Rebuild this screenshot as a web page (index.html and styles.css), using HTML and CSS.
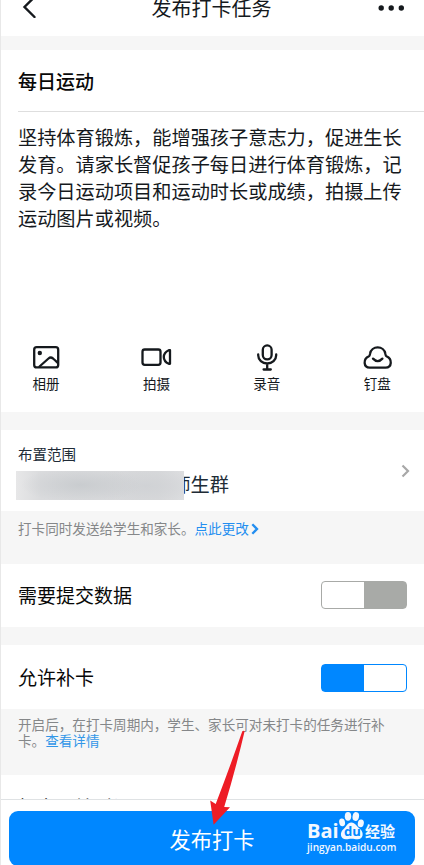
FILE: index.html
```html
<!DOCTYPE html>
<html lang="zh-CN">
<head>
<meta charset="utf-8">
<title>发布打卡任务</title>
<link rel="stylesheet" href="styles.css">
</head>
<body>
<div class="screen">
  <header class="topbar">
    <svg class="back" width="14" height="22" viewBox="0 0 14 22"><path d="M12.500 1L2.500 11l10 10"/></svg>
    <h1>发布打卡任务</h1>
    <svg class="more" width="28" height="6" viewBox="0 0 28 6"><circle cx="3.2" cy="3" r="2.7"/><circle cx="13.2" cy="3" r="2.7"/><circle cx="23.3" cy="3" r="2.7"/></svg>
  </header>
  <main class="content">
    <section class="task">
      <h2>每日运动</h2>
      <p class="desc">坚持体育锻炼，能增强孩子意志力，促进生长<br>发育。请家长督促孩子每日进行体育锻炼，记<br>录今日运动项目和运动时长或成绩，拍摄上传<br>运动图片或视频。</p>
      <div class="tools">
        <div class="tool">
          <svg width="32" height="28" viewBox="0 0 32 28"><rect x="4.2" y="4.2" width="24" height="20.200" rx="2.5"/><circle class="fill" cx="9.8" cy="10" r="2.2"/><path d="M9.500 23.500l9-8q2.200-1.900 4.500 0 1.800 1.600 4.500 4.200"/></svg>
          <span>相册</span>
        </div>
        <div class="tool">
          <svg width="32" height="28" viewBox="0 0 32 28"><rect x="2.500" y="6.5" width="18" height="15.3" rx="2.2"/><path d="M30 7.200v13.600h-1.200q-5-2.300-5-6.800t5-6.800z"/></svg>
          <span>拍摄</span>
        </div>
        <div class="tool">
          <svg width="32" height="28" viewBox="0 0 32 28"><rect x="11.800" y="2.400" width="8.8" height="14" rx="4.4"/><path d="M7.200 11.5v.8a9 8.2 0 0 0 18 0v-.8M16.200 20.500v6M12.600 26.5h7.200"/></svg>
          <span>录音</span>
        </div>
        <div class="tool">
          <svg width="32" height="28" viewBox="0 0 32 28"><path d="M8.800 24.600c-6.500 0-7-8.800-.8-11.400.9-.4.8-1.500 1.100-2.700a7.700 7.300 0 0 1 15.200 0c.3 1.200.2 2.300 1.100 2.700 6.200 2.600 5.700 11.400-.8 11.400z"/><path d="M12 15.600q4.700 5 9.400 0"/></svg>
          <span>钉盘</span>
        </div>
      </div>
    </section>
    <section class="scope">
      <div>
        <div class="label">布置范围</div>
        <div class="group"><span class="mask"></span><span class="name"><span>师生群</span></span></div>
      </div>
      <svg class="chevron" width="9" height="14" viewBox="0 0 9 14"><path d="M1.5 1.5L7 7l-5.5 5.5"/></svg>
    </section>
    <p class="note scope-note">打卡同时发送给学生和家长。<a>点此更改<svg width="8" height="12" viewBox="0 0 8 12"><path d="M1.3 1.3L6 6l-4.7 4.7"/></svg></a></p>
    <section class="row data-row"><span>需要提交数据</span><i class="switch"></i></section>
    <section class="row makeup-row"><span>允许补卡</span><i class="switch on"></i></section>
    <p class="note makeup-note">开启后，在打卡周期内，学生、家长可对未打卡的任务进行补<br>卡。<a>查看详情</a></p>
    <section class="row time-row"><span>打卡开始时间</span></section>
  </main>
  <footer class="bottom">
    <div class="publish">
      <span>发布打卡</span>
    </div>
  </footer>
  <svg class="arrow" width="36" height="96" viewBox="0 0 36 96"><path d="M32.200 1.600q1.800-1.800 2.300.2Q25.500 40 14.200 77l5.800.2L3.600 94.800.2 70.500l5.500 3.600Q19.500 38 32.200 1.600z"/></svg>
  <div class="brand">
    <div class="brand-top"><b class="bai">Bai</b><span class="paw"><svg width="27" height="29" viewBox="0 0 27 29"><ellipse cx="4.1" cy="11.4" rx="2.9" ry="3.9" transform="rotate(-12 4.1 11.4)"/><ellipse cx="10" cy="5.3" rx="3.2" ry="4.4"/><ellipse cx="17.8" cy="5.5" rx="3.2" ry="4.4" transform="rotate(12 17.8 5.5)"/><ellipse cx="22.8" cy="12.3" rx="3" ry="3.9" transform="rotate(12 22.8 12.3)"/><path d="M13.3 11.5c-4 0-4.6 4-7.4 6.3C1 21.5 2.500 28.300 8 28.300c2.200 0 3.500-.6 5.600-.6s3.700.6 5.900.6c5.800 0 7-6.800 2.300-10.500C18.500 15.500 17.500 11.500 13.300 11.500z"/></svg><b>du</b></span><b class="jy">经验</b></div>
    <div class="url">jingyan.baidu.com</div>
  </div>
</div>
</body>
</html>
```
FILE: styles.css
```css
* { box-sizing: border-box; }

body {
  margin: 0;
  background: #f6f6f6;
  color: #15191d;
  font-family: "Noto Sans CJK SC", sans-serif;
}

h1, h2, p { margin: 0; font-weight: 400; }

svg { display: block; fill: none; stroke: #15191d; }

.screen {
  position: relative;
  display: flex;
  flex-direction: column;
  width: 424px;
  height: 865px;
  overflow: hidden;
  border-left: 1px solid #e8e8e8;
}

.topbar {
  display: flex;
  flex: none;
  align-items: flex-start;
  justify-content: space-between;
  height: 36px;
  padding: 0 18px 0 21px;
  background: #fff;
}
.topbar h1 { margin: -7px 0 0 9px; font-size: 20px; line-height: 30px; }
.back { margin-top: -4px; stroke-width: 2.4; stroke-linecap: round; }
.more { margin-top: 5px; fill: #15191d; stroke: none; }

.content { flex: 1; min-height: 0; overflow: hidden; }

.task {
  height: 362px;
  margin: 14px 0 18px;
  padding-left: 17px;
  background: #fff;
}
.task h2 {
  height: 62px;
  border-bottom: 1px solid #dedede;
  color: #080808;
  font-size: 19px;
  font-weight: 500;
  line-height: 62px;
}
.desc {
  height: 181px;
  padding-top: 12px;
  font-size: 19.2px;
  line-height: 27px;
  white-space: nowrap;
}

.tools { display: flex; gap: 78.400px; padding: 50px 0 0 12px; }
.tool {
  display: flex;
  flex-direction: column;
  align-items: center;
  width: 32px;
  font-size: 13.5px;
  line-height: 20px;
  white-space: nowrap;
}
.tool span { margin-top: 2px; }
.tool svg { stroke-width: 2.3; stroke-linecap: round; stroke-linejoin: round; }
.tool .fill { fill: #15191d; stroke: none; }

.scope {
  display: flex;
  align-items: center;
  justify-content: space-between;
  height: 81px;
  padding: 0 14px 0 17px;
  background: #fff;
}
.label { height: 28px; color: #202b36; font-size: 14.5px; line-height: 23px; }
.group { display: flex; height: 29px; margin: 1px 0 -1px -2px; }
.mask {
  width: 168px;
  background:
    radial-gradient(ellipse 60px 18px at 65px 14px, #c9cccf, transparent),
    radial-gradient(ellipse 60px 20px at 130px 15px, #d0d2d5, transparent),
    linear-gradient(90deg, #e7e7e8, #dadbdd 15%, #d8d9db 85%, #dedfe1);
}
.name {
  display: flex;
  justify-content: flex-end;
  width: 45px;
  overflow: hidden;
  color: #202b36;
  font-size: 19.200px;
  line-height: 27px;
  white-space: nowrap;
}
.chevron { stroke: #a8a8a8; stroke-width: 2.2; }

.note { color: #858789; font-size: 13.58px; white-space: nowrap; }
.note a { color: #3296e8; }
.scope-note { display: flex; height: 53px; padding: 7px 0 0 17px; line-height: 21px; }
.scope-note a { display: flex; align-items: center; height: 21px; color: #238ef0; }
.scope-note svg { margin-left: 2px; stroke: #238ef0; stroke-width: 2.3; }

.row {
  display: flex;
  align-items: center;
  justify-content: space-between;
  padding: 0 17px;
  background: #fff;
  color: #080808;
  font-size: 19px;
}
.data-row { height: 63px; margin-bottom: 18px; }
.makeup-row { height: 64px; }
.row span { margin-top: -2px; }
.data-row span { margin-top: -3px; }

.switch {
  width: 86px;
  height: 28px;
  margin-top: -1px;
  border: 1px solid #a8aaa7;
  border-radius: 4px;
  background: linear-gradient(90deg, #fff 42px, #a8aaa7 42px);
}
.switch.on {
  margin-top: 1px;
  border-color: #0087ff;
  background: linear-gradient(90deg, #0087ff 42px, #fff 42px);
}

.makeup-note { height: 66px; padding: 8px 0 0 17px; line-height: 15.5px; }
.time-row { align-items: flex-start; height: 40px; padding-top: 20px; line-height: 28px; }

.bottom {
  flex: none;
  height: 66px;
  padding: 11px 9px 0 8px;
  border-top: 1px solid #dfe2e4;
  background: #fff;
}
.publish {
  height: 55px;
  border-radius: 9px;
  background: #0087ff;
  color: #fff;
  font-size: 21.2px;
  line-height: 56px;
  text-align: center;
}

.arrow { position: absolute; left: 209px; top: 730px; fill: #ee1c25; stroke: none; }

.brand { position: absolute; left: 306px; top: 811px; width: 92px; color: #f3f8ff; }
.brand-top { display: flex; height: 30px; }
.bai {
  width: 31px;
  padding-top: 8px;
  font: 700 20px/24px "Open Sans", sans-serif;
}
.paw { position: relative; width: 27px; height: 29px; }
.paw svg { fill: #f3f8ff; stroke: none; }
.paw b {
  position: absolute;
  left: 6px;
  top: 13px;
  color: #0087ff;
  font: 700 13px/15px "Open Sans", sans-serif;
}
.jy { margin-top: 8px; font-size: 15px; line-height: 24px; white-space: nowrap; }
.url { font: 600 10.1px/12px "Open Sans", sans-serif; white-space: nowrap; }
```
